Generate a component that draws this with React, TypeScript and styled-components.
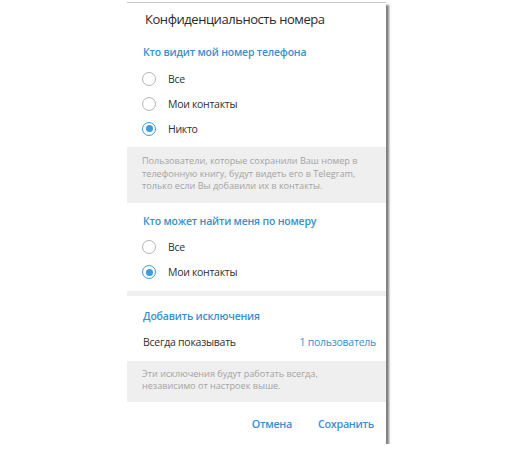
import React from 'react'
import styled, { createGlobalStyle } from 'styled-components'

const GlobalStyle = createGlobalStyle`
  html, body {
    margin: 0;
    padding: 0;
    background: #ffffff;
  }
  body {
    font-family: "Open Sans", "Noto Sans", "DejaVu Sans", sans-serif;
  }
`

const Dialog = styled.div`
  width: 259px;
  margin: 2px 0 0 127px;
  background: #ffffff;
  border-top: 1px solid #c8c8c8;
  box-shadow: 3px 3px 2px rgba(0, 0, 0, 0.5);
  display: flex;
  flex-direction: column;
`

const Title = styled.div`
  padding: 5px 18px 0;
  font-size: 13px;
  letter-spacing: -0.45px;
  line-height: 22px;
  color: #2a2a2a;
`

const SectionHeader = styled.div<{ $top: number }>`
  margin-top: ${(p) => p.$top}px;
  padding: 0 16px;
  font-size: 10.5px;
  letter-spacing: -0.2px;
  font-weight: 600;
  line-height: 16px;
  color: #3a8fd0;
`

const Options = styled.div<{ $top: number; $bottom: number }>`
  display: flex;
  flex-direction: column;
  padding: ${(p) => p.$top}px 0 ${(p) => p.$bottom}px;
`

const OptionRow = styled.div`
  display: flex;
  align-items: center;
  gap: 12px;
  height: 25px;
  padding-left: 15px;
  font-size: 10.5px;
  letter-spacing: -0.3px;
  color: #303030;
`

const Circle = styled.span<{ $on: boolean }>`
  box-sizing: border-box;
  width: 14px;
  height: 14px;
  border-radius: 50%;
  border: 1.5px solid ${(p) => (p.$on ? '#3d9ae0' : '#b4b4b4')};
  display: flex;
  align-items: center;
  justify-content: center;
  &::after {
    content: '';
    width: 7px;
    height: 7px;
    border-radius: 50%;
    background: ${(p) => (p.$on ? '#3d9ae0' : 'transparent')};
  }
`

const Note = styled.div<{ $top: number; $bottom: number }>`
  background: #efefef;
  padding: ${(p) => p.$top}px 15px ${(p) => p.$bottom}px;
  font-size: 9.1px;
  line-height: 12.5px;
  white-space: nowrap;
  color: #a3a3a3;
`

const Divider = styled.div`
  height: 5px;
  background: #efefef;
`

const ValueRow = styled.div`
  display: flex;
  align-items: center;
  justify-content: space-between;
  height: 25px;
  margin: 6px 0 6px;
  padding: 0 10px 0 16px;
  font-size: 10.5px;
  letter-spacing: -0.25px;
  color: #303030;
`

const ValueLink = styled.span`
  color: #3a8fd0;
`

const Footer = styled.div`
  display: flex;
  justify-content: flex-end;
  gap: 26px;
  padding: 14px 12px 12px;
`

const FooterButton = styled.span`
  font-size: 10.8px;
  letter-spacing: -0.3px;
  font-weight: 600;
  line-height: 16px;
  color: #3a8fd0;
`

function Radio({ label, on }: { label: string; on?: boolean }) {
  return (
    <OptionRow>
      <Circle $on={!!on} />
      <span>{label}</span>
    </OptionRow>
  )
}

export default function App() {
  return (
    <>
      <GlobalStyle />
      <Dialog>
        <Title>Конфиденциальность номера</Title>

        <SectionHeader $top={14}>Кто видит мой номер телефона</SectionHeader>
        <Options $top={6} $bottom={6}>
          <Radio label="Все" />
          <Radio label="Мои контакты" />
          <Radio label="Никто" on />
        </Options>
        <Note $top={8} $bottom={10}>
          Пользователи, которые сохранили Ваш номер в
          <br />
          телефонную книгу, будут видеть его в Telegram,
          <br />
          только если Вы добавили их в контакты.
        </Note>

        <SectionHeader $top={10}>Кто может найти меня по номеру</SectionHeader>
        <Options $top={6} $bottom={6}>
          <Radio label="Все" />
          <Radio label="Мои контакты" on />
        </Options>
        <Divider />

        <SectionHeader $top={12}>Добавить исключения</SectionHeader>
        <ValueRow>
          <span>Всегда показывать</span>
          <ValueLink>1 пользователь</ValueLink>
        </ValueRow>
        <Note $top={7} $bottom={9}>
          Эти исключения будут работать всегда,
          <br />
          независимо от настроек выше.
        </Note>

        <Footer>
          <FooterButton>Отмена</FooterButton>
          <FooterButton>Сохранить</FooterButton>
        </Footer>
      </Dialog>
    </>
  )
}
